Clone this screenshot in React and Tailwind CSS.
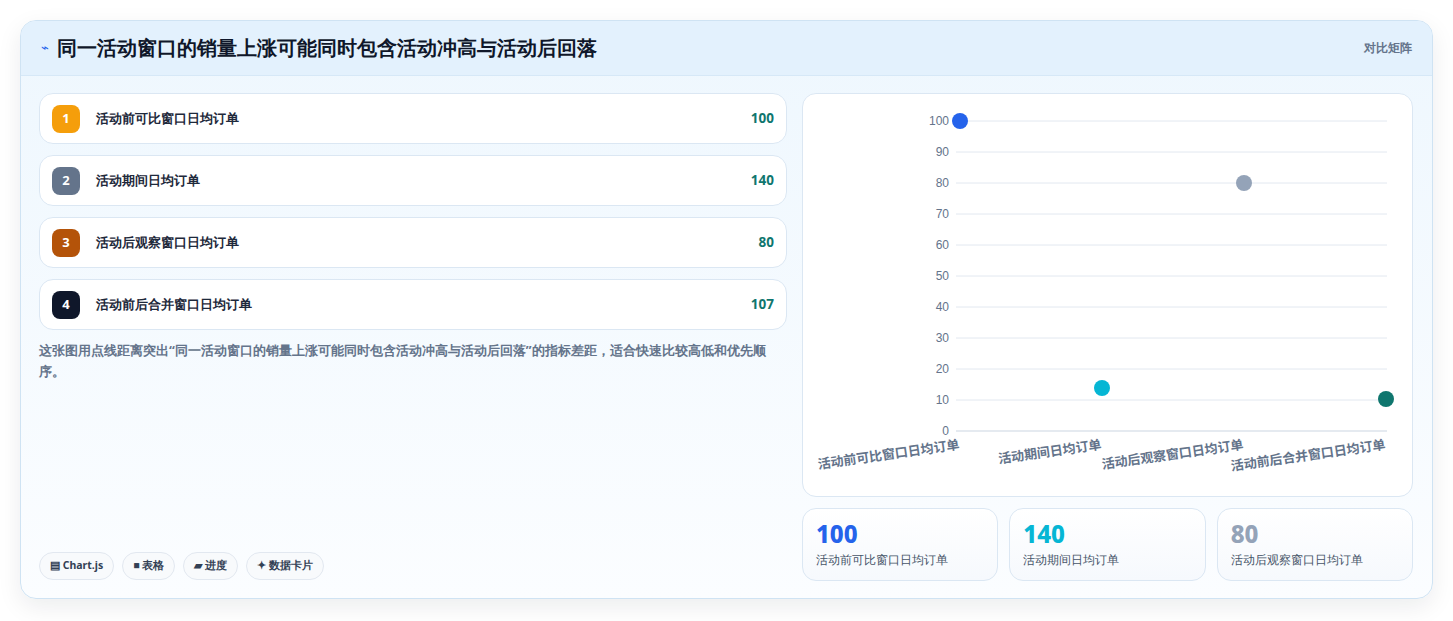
import React from "react";

const rows = [
  { n: 1, label: "活动前可比窗口日均订单", v: 100, c: "bg-[#f59e0b]" },
  { n: 2, label: "活动期间日均订单", v: 140, c: "bg-[#64748b]" },
  { n: 3, label: "活动后观察窗口日均订单", v: 80, c: "bg-[#b45309]" },
  { n: 4, label: "活动前后合并窗口日均订单", v: 107, c: "bg-[#0f172a]" },
];

function Chart() {
  const ys = [0, 10, 20, 30, 40, 50, 60, 70, 80, 90, 100];
  const y0 = 337, k = 3.1;
  const pts = [
    { x: 157, y: 27, c: "#2563eb" },
    { x: 299, y: 294, c: "#06b6d4" },
    { x: 441, y: 89, c: "#94a3b8" },
    { x: 583, y: 305, c: "#0f766e" },
  ];
  const labels = [
    { x: 157, t: "活动前可比窗口日均订单" },
    { x: 299, t: "活动期间日均订单" },
    { x: 441, t: "活动后观察窗口日均订单" },
    { x: 583, t: "活动前后合并窗口日均订单" },
  ];
  return (
    <svg width="609" height="401" className="block">
      {ys.map((v) => {
        const y = y0 - v * k;
        return (
          <g key={v}>
            <line x1="153" x2="584" y1={y} y2={y} stroke={v === 0 ? "#cbd5e1" : "#e2e8f0"} strokeWidth="1" />
            <text x="146" y={y + 4} textAnchor="end" fontSize="12" fill="#64748b" fontFamily="Liberation Sans, sans-serif">{v}</text>
          </g>
        );
      })}
      {pts.map((p, i) => (
        <circle key={i} cx={p.x} cy={p.y} r="8" fill={p.c} />
      ))}
      {labels.map((l, i) => (
        <text key={i} x={l.x} y={355} textAnchor="end" fontSize="13" fontWeight="700" fill="#64748b"
          transform={`rotate(-8 ${l.x} 355)`} fontFamily="Noto Sans CJK SC, sans-serif">{l.t}</text>
      ))}
    </svg>
  );
}

export default function App() {
  return (
    <div className="w-[1453px] h-[621px] bg-white pt-[20px] pl-[20px] font-['Noto_Sans_CJK_SC','Noto_Sans',sans-serif]">
      <div className="w-[1413px] h-[579px] rounded-[16px] border border-[#cfe3f3] shadow-[0_8px_24px_rgba(15,23,42,0.08)] overflow-hidden bg-gradient-to-b from-[#eef7fe] to-[#fbfdff] flex flex-col">
        <div className="h-[55px] shrink-0 bg-[#e3f1fd] border-b border-[#d6e8f7] flex items-center justify-between px-[20px]">
          <div className="flex items-center gap-[8px]">
            <span className="text-[#2563eb] text-[13px]">⌁</span>
            <span className="text-[20px] font-bold text-[#0f172a]">同一活动窗口的销量上涨可能同时包含活动冲高与活动后回落</span>
          </div>
          <span className="text-[12px] font-bold text-[#64748b]">对比矩阵</span>
        </div>
        <div className="flex gap-[15px] px-[18px] pt-[17px] flex-1">
          <div className="w-[748px] flex flex-col pb-[18px]">
            <div className="flex flex-col gap-[11px]">
              {rows.map((r) => (
                <div key={r.n} className="h-[51px] rounded-[14px] border border-[#dbe7f3] bg-white flex items-center pl-[12px] pr-[12px]">
                  <div className={`w-[28px] h-[28px] rounded-[8px] ${r.c} text-white text-[13px] font-bold flex items-center justify-center`}>{r.n}</div>
                  <span className="ml-[16px] text-[13px] font-bold text-[#1e293b] flex-1">{r.label}</span>
                  <span className="text-[13.5px] font-bold text-[#0f766e]">{r.v}</span>
                </div>
              ))}
            </div>
            <p className="mt-[10px] text-[13px] font-bold leading-[21px] text-[#64748b]">这张图用点线距离突出“同一活动窗口的销量上涨可能同时包含活动冲高与活动后回落”的指标差距，适合快速比较高低和优先顺序。</p>
            <div className="mt-auto flex gap-[8px]">
              {["▤ Chart.js", "■ 表格", "▰ 进度", "✦ 数据卡片"].map((t) => (
                <span key={t} className="h-[28px] px-[10px] rounded-full border border-[#e2e8f0] bg-[#f8fafc] text-[10.5px] font-bold text-[#334155] flex items-center">{t}</span>
              ))}
            </div>
          </div>
          <div className="w-[611px] flex flex-col gap-[11px]">
            <div className="h-[404px] rounded-[14px] border border-[#dbe7f3] bg-white">
              <Chart />
            </div>
            <div className="flex gap-[11px]">
              {[
                { v: 100, c: "text-[#2563eb]", l: "活动前可比窗口日均订单" },
                { v: 140, c: "text-[#06b6d4]", l: "活动期间日均订单" },
                { v: 80, c: "text-[#94a3b8]", l: "活动后观察窗口日均订单" },
              ].map((s) => (
                <div key={s.v} className="flex-1 h-[73px] rounded-[14px] border border-[#dbe7f3] bg-gradient-to-b from-white to-[#f6f9fd] px-[13px] pt-[10px]">
                  <div className={`text-[24px] leading-[30px] font-extrabold ${s.c}`}>{s.v}</div>
                  <div className="text-[12px] text-[#475569] mt-[2px]">{s.l}</div>
                </div>
              ))}
            </div>
          </div>
        </div>
      </div>
    </div>
  );
}
